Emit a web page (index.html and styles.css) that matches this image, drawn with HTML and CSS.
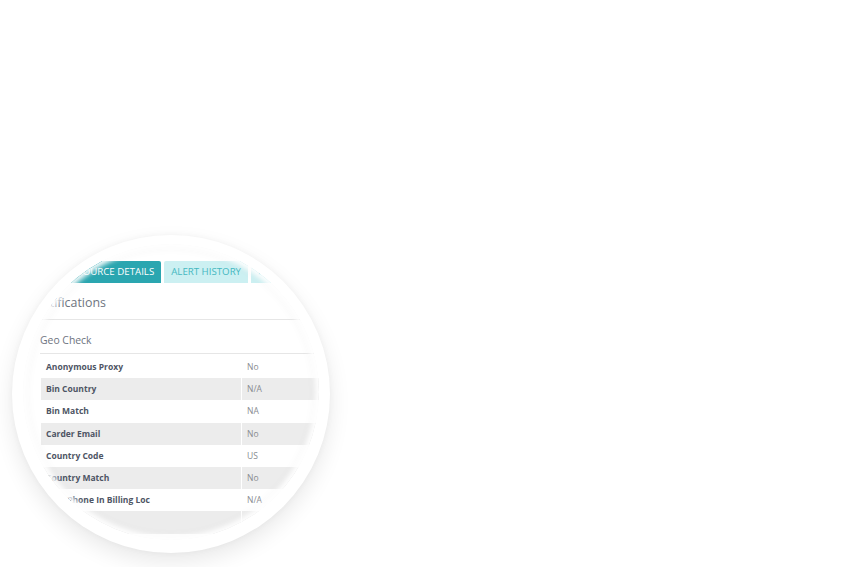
FILE: index.html
```html
<!DOCTYPE html>
<html>
<head>
<meta charset="utf-8">
<link rel="stylesheet" href="styles.css">
</head>
<body>
<div class="stage">
  <div class="lens">
    <div class="lens-inner">
      <div class="panel">
        <div class="tabs">
          <div class="tab tab-active">RESOURCE DETAILS</div>
          <div class="tab">ALERT HISTORY</div>
          <div class="tab">NOTES</div>
        </div>
        <div class="heading">Notifications</div>
        <div class="section-title">Geo Check</div>
        <div class="table">
          <div class="row"><div class="label">Anonymous Proxy</div><div class="value">No</div></div>
          <div class="row row-alt"><div class="label">Bin Country</div><div class="value">N/A</div></div>
          <div class="row"><div class="label">Bin Match</div><div class="value">NA</div></div>
          <div class="row row-alt"><div class="label">Carder Email</div><div class="value">No</div></div>
          <div class="row"><div class="label">Country Code</div><div class="value">US</div></div>
          <div class="row row-alt"><div class="label">Country Match</div><div class="value">No</div></div>
          <div class="row"><div class="label">Cust Phone In Billing Loc</div><div class="value">N/A</div></div>
          <div class="row row-alt"><div class="label"></div><div class="value"></div></div>
          <div class="row"><div class="label"></div><div class="value"></div></div>
        </div>
      </div>
    </div>
  </div>
</div>
</body>
</html>
```

FILE: styles.css
```css
html, body {
  margin: 0;
  padding: 0;
  background: #ffffff;
}

.stage {
  width: 868px;
  height: 567px;
  overflow: hidden;
  padding: 235px 0 0 12px;
  box-sizing: border-box;
}

.lens {
  width: 318px;
  height: 318px;
  border-radius: 50%;
  background: #ffffff;
  box-shadow: 0 9px 22px rgba(0, 0, 0, 0.09), 0 0 6px rgba(0, 0, 0, 0.04);
  padding: 9px 11px 13px 11px;
  box-sizing: border-box;
}

.lens-inner {
  width: 296px;
  height: 296px;
  border-radius: 50%;
  overflow: hidden;
  position: relative;
  background: #ffffff;
}

.lens-inner::after {
  content: "";
  position: absolute;
  inset: 0;
  border-radius: 50%;
  box-shadow: inset 0 0 5px 4px rgba(255, 255, 255, 0.95), inset 0 0 12px 2px rgba(0, 0, 0, 0.05);
  pointer-events: none;
}

.panel {
  width: 340px;
  padding-top: 17px;
  font-family: "Open Sans", "Liberation Sans", sans-serif;
}

.tabs {
  display: flex;
  gap: 3px;
  margin-left: 36px;
  height: 22px;
}

.tab {
  height: 22px;
  line-height: 22px;
  padding: 0 7px;
  font-size: 9.7px;
  color: #45b8c1;
  background: #ccf0f2;
  border-radius: 2px 2px 0 0;
  white-space: nowrap;
}

.tab-active {
  background: #2aa6b0;
  color: #ffffff;
}

.heading {
  margin-left: 10px;
  padding-top: 12px;
  height: 24px;
  line-height: 16px;
  font-size: 12.4px;
  color: #6e7480;
  border-bottom: 1px solid #e6e6e6;
}

.section-title {
  margin-left: 17px;
  padding-top: 12px;
  height: 21px;
  line-height: 16px;
  font-size: 10.4px;
  color: #6e7480;
  border-bottom: 1px solid #e6e6e6;
}

.table {
  margin-left: 18px;
  padding-top: 2px;
}

.row {
  display: flex;
  height: 22.2px;
  line-height: 22.2px;
  font-size: 8.5px;
}

.row-alt {
  background: #ececec;
}

.label {
  width: 201px;
  padding-left: 5px;
  box-sizing: border-box;
  font-weight: 700;
  color: #4e5564;
  border-right: 1px solid #ffffff;
  white-space: nowrap;
}

.value {
  padding-left: 5px;
  color: #888b8f;
}
```
